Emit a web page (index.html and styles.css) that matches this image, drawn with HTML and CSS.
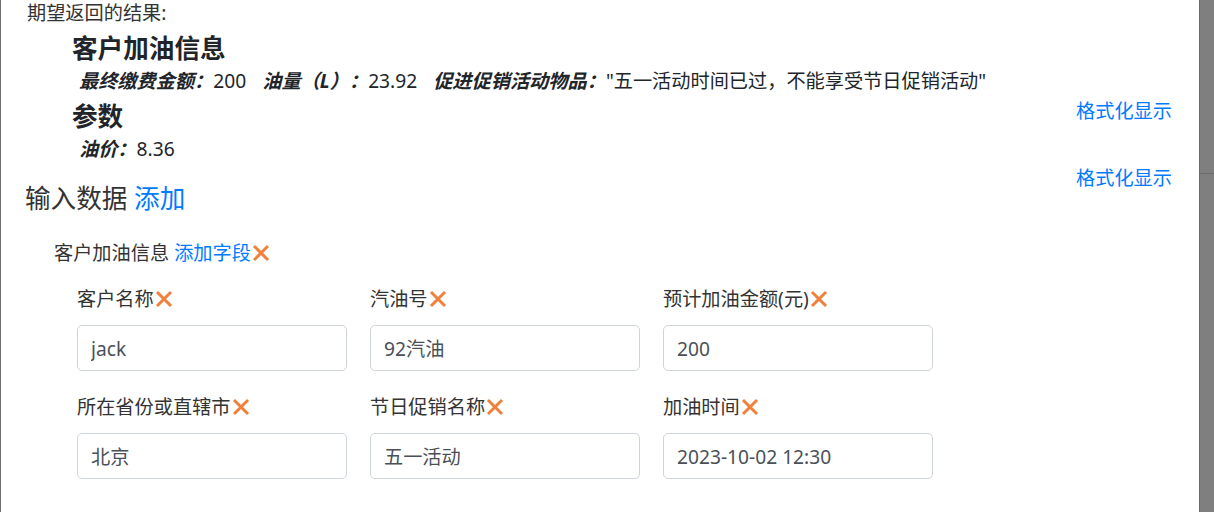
FILE: index.html
```html
<!DOCTYPE html>
<html lang="zh-CN">
<head>
    <meta charset="UTF-8">
    <meta name="viewport" content="width=device-width, initial-scale=1.0">
    <title>测试用例</title>
    <link rel="stylesheet" href="styles.css">
</head>
<body>

<div class="backdrop">
    <div class="edge-left"></div>

    <main class="panel">
        <!-- Expected result -->
        <section class="expect">
            <div class="expect-title">期望返回的结果:</div>
            <div class="expect-body">
                <div class="result-list">
                    <h3>客户加油信息</h3>
                    <div class="kv-row">
                        <span class="kv"><b>最终缴费金额：</b>200</span>
                        <span class="kv"><b>油量（L）：</b>23.92</span>
                        <span class="kv"><b>促进促销活动物品：</b>"五一活动时间已过，不能享受节日促销活动"</span>
                    </div>
                    <h3>参数</h3>
                    <div class="kv-row">
                        <span class="kv"><b>油价：</b>8.36</span>
                    </div>
                </div>
                <a class="fmt-link" href="#">格式化显示</a>
            </div>
        </section>

        <div class="link-row"><a class="fmt-link" href="#">格式化显示</a></div>

        <!-- Input data -->
        <h4 class="input-title">输入数据 <a href="#">添加</a></h4>

        <div class="group">
            <div class="group-head">
                客户加油信息 <a href="#">添加字段</a><svg class="x-icon" viewBox="0 0 18 18"><path d="M2 2 L16 16 M16 2 L2 16"/></svg>
            </div>

            <div class="fields">
                <div class="field">
                    <label>客户名称<svg class="x-icon" viewBox="0 0 18 18"><path d="M2 2 L16 16 M16 2 L2 16"/></svg></label>
                    <input type="text" value="jack">
                </div>
                <div class="field">
                    <label>汽油号<svg class="x-icon" viewBox="0 0 18 18"><path d="M2 2 L16 16 M16 2 L2 16"/></svg></label>
                    <input type="text" value="92汽油">
                </div>
                <div class="field">
                    <label>预计加油金额(元)<svg class="x-icon" viewBox="0 0 18 18"><path d="M2 2 L16 16 M16 2 L2 16"/></svg></label>
                    <input type="text" value="200">
                </div>
                <div class="field">
                    <label>所在省份或直辖市<svg class="x-icon" viewBox="0 0 18 18"><path d="M2 2 L16 16 M16 2 L2 16"/></svg></label>
                    <input type="text" value="北京">
                </div>
                <div class="field">
                    <label>节日促销名称<svg class="x-icon" viewBox="0 0 18 18"><path d="M2 2 L16 16 M16 2 L2 16"/></svg></label>
                    <input type="text" value="五一活动">
                </div>
                <div class="field">
                    <label>加油时间<svg class="x-icon" viewBox="0 0 18 18"><path d="M2 2 L16 16 M16 2 L2 16"/></svg></label>
                    <input type="text" value="2023-10-02 12:30">
                </div>
            </div>
        </div>
    </main>

    <div class="edge-right"><div class="edge-top"></div></div>
</div>

</body>
</html>
```

FILE: styles.css
```css
/* General styling */
html, body {
    margin: 0;
    padding: 0;
    height: 100%;
    overflow: hidden;
}

body {
    font-family: 'Noto Sans', 'Noto Sans CJK SC', sans-serif;
    font-size: 19.2px;
    color: rgb(33, 37, 41);
    background-color: rgb(127, 127, 127);
}

a {
    color: rgb(0, 123, 255);
    text-decoration: none;
}

.backdrop {
    display: flex;
    height: 512px;
}

.edge-left {
    width: 1px;
    background-color: rgb(110, 110, 110);
}

.edge-right {
    flex: 1;
    border-left: 1px solid rgb(105, 105, 105);
}

.edge-top {
    height: 173px;
    border-bottom: 1px solid rgb(108, 108, 108);
}

.panel {
    width: 1198px;
    box-sizing: border-box;
    padding: 1px 27px 0 24px;
    background-color: white;
}

/* Expected result */
.expect-title {
    line-height: 24px;
    padding-left: 2px;
    color: rgb(51, 51, 51);
}

.expect-body {
    display: flex;
}

.result-list {
    padding-left: 47px;
}

.result-list h3 {
    margin: 9px 0 5px;
    font-size: 25.6px;
    line-height: 30px;
    font-weight: bold;
}

.kv-row {
    padding-left: 7px;
    line-height: 24px;
    display: flex;
    gap: 16px;
}

.kv b {
    font-style: italic;
}

.fmt-link {
    line-height: 24px;
}

.expect-body .fmt-link {
    margin-left: auto;
    margin-top: 74px;
    align-self: flex-start;
}

.link-row {
    text-align: right;
    margin-top: 5px;
    line-height: 20px;
}

/* Input data */
.input-title {
    margin: -3px 0 0;
    font-size: 25.6px;
    font-weight: normal;
    line-height: 24px;
    color: rgb(51, 51, 51);
}

.group-head {
    margin-top: 30px;
    padding-left: 29px;
    line-height: 24px;
    color: rgb(51, 51, 51);
}

.x-icon {
    width: 18px;
    height: 18px;
    margin-left: 1px;
    vertical-align: -2px;
    fill: none;
    stroke: rgb(240, 128, 60);
    stroke-width: 3;
}

.fields {
    display: grid;
    grid-template-columns: repeat(3, 270px);
    column-gap: 23px;
    row-gap: 24px;
    margin-top: 22px;
    padding-left: 52px;
}

.field label {
    display: block;
    line-height: 24px;
    color: rgb(51, 51, 51);
}

.field input {
    display: block;
    box-sizing: border-box;
    width: 100%;
    height: 46px;
    margin-top: 14px;
    padding: 0 13px;
    border: 1px solid rgb(206, 212, 218);
    border-radius: 5px;
    font-family: inherit;
    font-size: 19.2px;
    color: rgb(73, 80, 87);
    outline: none;
}
```
